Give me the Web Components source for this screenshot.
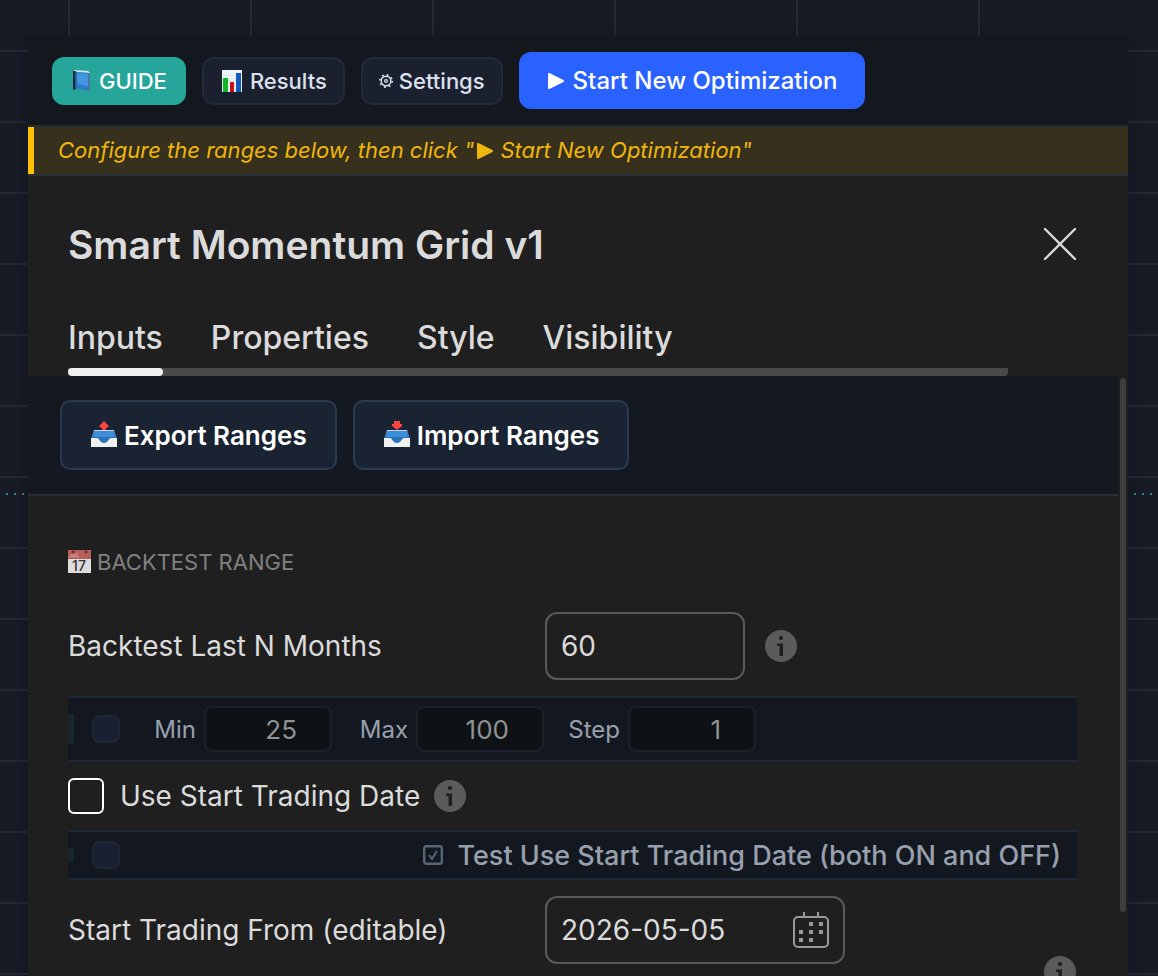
<!DOCTYPE html>
<html lang="en">
<head>
<meta charset="utf-8">
<title>Smart Momentum Grid v1</title>
<style>
  body {
    margin: 0;
    font-family: Inter, "Liberation Sans", sans-serif;
    color: #dbdbdb;
    background: #181b26;
  }
</style>
</head>
<body>
<chart-backdrop>
  <settings-dialog></settings-dialog>
</chart-backdrop>

<script>
function attach(el, html) {
  const template = document.createElement('template');
  template.innerHTML = html;
  el.attachShadow({ mode: 'open' });
  el.shadowRoot.appendChild(template.content.cloneNode(true));
}

// the tray shared by the export and import icons
const TRAY = `
    <path d="M4 9h20l3 10v7H1v-7z" fill="#c3d4e2"/><path d="M4 10h20l3 8-4 4H5l-4-4z" fill="#2c72b8"/>
    <path d="M5 10h18l2 6H3z" fill="#3c8edc"/>
    <path d="M1 17h6c2 0 3 5 7 5s5-5 7-5h6v9H1z" fill="#f0f0ee"/>`;

const ICONS = {
  book: `<svg width="22" height="24" viewBox="0 0 22 24">
    <path d="M2 1l3 1v18l-3 1z" fill="#10283c"/><path d="M2 1l15 1 2 2-14-1z" fill="#dce6ee"/>
    <path d="M4 3l14 1v18L4 19z" fill="#2f7cc6"/><path d="M6 4l11 1v12L6 15z" fill="#4295df"/>
    <path d="M18 4h1v18l-1 0z" fill="#5d7486"/><path d="M5 2v18" stroke="#1f4f7c"/></svg>`,
  chart: `<svg width="24" height="24" viewBox="-2 0 24 24">
    <path d="M0 1h20v22H0z" fill="#edf3f6"/><path d="M0 6h20M0 11h20M0 16h20" stroke="#dae4ea"/>
    <path d="M1 9h5v14H1z" fill="#10b529"/><path d="M8 13h4v10H8z" fill="#c41111"/><path d="M14 4h5v19h-5z" fill="#1559bd"/></svg>`,
  gear: `<svg width="14" height="16" viewBox="1 0 14 16" fill="none" stroke="#dbe2ee">
    <circle cx="8" cy="8" r="4.8" stroke-width="1.4"/><circle cx="8" cy="8" r="1.4" stroke-width="1.2"/>
    <circle cx="8" cy="8" r="6.2" stroke-width="1.6" stroke-dasharray="1.8 3.07"/></svg>`,
  play: `<svg width="18" height="18" viewBox="0 0 18 18"><path d="M2 2v14l14-7z" fill="currentColor" stroke="currentColor" stroke-width="2" stroke-linejoin="round"/></svg>`,
  export: `<svg width="28" height="28" viewBox="0 0 28 28">${TRAY}
    <path d="M14 0l5 5-2 2h-1v2h-4V7h-1L9 5z" fill="#f54740"/></svg>`,
  import: `<svg width="28" height="28" viewBox="0 0 28 28">${TRAY}
    <path d="M11 0h6v3h2v2l-5 4-5-4V3h2z" fill="#f54740"/></svg>`,
  date: `<svg width="23" height="24" viewBox="0 0 23 24">
    <path d="M0 0h23v23H0z" fill="#ddd"/><path d="M0 0h23v9H0z" fill="#b85e5c"/>
    <path d="M3 4v3H1M5 4v3h2V4M9 3v4h2" stroke="#dc9c98" fill="none"/>
    <circle cx="5" cy="2" r="1.4" fill="#642f2e"/><circle cx="18" cy="2" r="1.4" fill="#642f2e"/>
    <text x="11" y="21" font-size="14" font-weight="500" text-anchor="middle" fill="#333">17</text></svg>`,
  info: `<svg width="32" height="32" viewBox="0 0 32 32"><circle cx="16" cy="16" r="16" fill="#5b5b5b"/>
    <circle cx="16" cy="8" r="2.1" fill="#1f1f1f"/><path d="M12 13.5h6V26h-3.5V16H12z" fill="#1f1f1f"/></svg>`,
  calendar: `<svg width="36" height="36" viewBox="0 0 36 36"><rect x="1" y="5" width="34" height="30" rx="4" fill="none" stroke="#9a9a9a" stroke-width="2"/>
    <path d="M11 0v5M25 0v5" stroke="#9a9a9a" stroke-width="2"/>
    <path d="M16 10h4v4h-4zM26 10h4v4h-4zM6 18h4v4H6zM16 18h4v4h-4zM26 18h4v4h-4zM6 26h4v4H6zM16 26h4v4h-4z" fill="#9a9a9a"/></svg>`,
  close: `<svg width="36" height="36" viewBox="0 0 36 36"><path d="M3 3l30 30M33 3L3 33" stroke="#dbdbdb" stroke-width="2.4" stroke-linecap="round"/></svg>`,
  ticked: `<svg width="20" height="20" viewBox="0 0 20 20" fill="none" stroke="#566575" stroke-width="2.4"><rect x="1.2" y="1.2" width="17.6" height="17.6" rx="2"/><path d="M6 10l3 4 5-8" stroke-width="2"/></svg>`
};

class UiIcon extends HTMLElement {
  constructor() {
    super();
    attach(this, `
    <style>
      :host { display: inline-flex; flex: none; }
      svg { display: block; }
    </style>
    ${ICONS[this.getAttribute('name')]}`);
  }
}

// chart grid with the dotted last-price line
class ChartBackdrop extends HTMLElement {
  constructor() {
    super();
    attach(this, `
    <style>
      :host {
        display: flex;
        box-sizing: border-box;
        height: 100vh;
        padding: 36px 30px 0 28px;
        overflow: hidden;
        background:
          linear-gradient(to right, #2b8f87 2px, transparent 2px) 6px 493px / 8px 2px repeat-x,
          linear-gradient(to right, #252935 2px, transparent 2px) 68px 0 / 182px 71px,
          linear-gradient(#252935 2px, transparent 2px) 0 50px / 182px 71px,
          #181b26;
      }
    </style>
    <slot></slot>`);
  }
}

class ToolButton extends HTMLElement {
  constructor() {
    super();
    attach(this, `
    <style>
      :host { display: block; }
      button {
        display: flex;
        align-items: center;
        justify-content: center;
        gap: 6px;
        height: 48px;
        padding: 0 16px;
        border: 2px solid #242a38;
        border-radius: 12px;
        background: #1b202e;
        color: #dbe2ee;
        font: 500 22px Inter, sans-serif;
        white-space: nowrap;
      }
      :host([kind=guide]) button { padding: 0 17px; background: #26a69a; border-color: #26a69a; color: #fff; }
      :host([kind=start]) button {
        gap: 8px;
        height: 57px;
        padding: 0 26px;
        background: #2962ff;
        border-color: #2962ff;
        color: #fff;
        font-size: 24px;
      }
      :host([kind=range]) button {
        height: 70px;
        padding: 0 28px;
        border-color: #2a3a50;
        border-radius: 10px;
        background: #1a2332;
        color: #fff;
        font-size: 26px;
        font-weight: 600;
      }
    </style>
    <button type="button"><ui-icon name="${this.getAttribute('icon')}"></ui-icon><slot></slot></button>`);
  }
}

class HintBanner extends HTMLElement {
  constructor() {
    super();
    attach(this, `
    <style>
      :host {
        display: block;
        padding-left: 24px;
        border-left: 6px solid #ffc107;
        background: #36301c;
        color: #efb60d;
        font-size: 22px;
        font-style: italic;
        line-height: 47px;
      }
      ::slotted(ui-icon) { margin-left: 2px; vertical-align: -2px; }
    </style>
    <slot></slot>`);
  }
}

class TabBar extends HTMLElement {
  constructor() {
    super();
    attach(this, `
    <style>
      :host { display: block; margin-right: 80px; }
      nav {
        display: flex;
        gap: 48px;
        border-radius: 4px;
        background: linear-gradient(#4a4a4a, #4a4a4a) bottom / 100% 8px no-repeat;
      }
      button {
        position: relative;
        padding: 0 0 18px;
        border: 0;
        background: none;
        color: inherit;
        font: 500 32px/40px Inter, sans-serif;
      }
      .active::after {
        content: "";
        position: absolute;
        inset: auto 0 0 0;
        height: 8px;
        border-radius: 4px;
        background: #f0f0f0;
      }
    </style>
    <nav>
      <button type="button" class="active">Inputs</button>
      <button type="button">Properties</button>
      <button type="button">Style</button>
      <button type="button">Visibility</button>
    </nav>`);
  }
}

class InputRow extends HTMLElement {
  constructor() {
    super();
    const date = this.getAttribute('type') === 'date';
    attach(this, `
    <style>
      :host {
        display: grid;
        grid-template-columns: 477px auto 1fr;
        align-items: start;
      }
      label { font-size: 28px; line-height: 68px; }
      .box {
        display: flex;
        align-items: center;
        box-sizing: border-box;
        width: ${date ? 300 : 200}px;
        height: 68px;
        padding: 0 14px;
        border: 2px solid #5a5a5a;
        border-radius: 12px;
      }
      input {
        flex: 1;
        min-width: 0;
        padding: 0;
        border: 0;
        outline: 0;
        background: none;
        color: inherit;
        font: 28px Inter, sans-serif;
      }
      .info { margin: 18px 0 0 20px; }
      .info.end { margin: 60px 2px 0 0; justify-self: end; }
    </style>
    <label for="value">${this.getAttribute('label')}</label>
    <div class="box">
      <input id="value" type="text" value="${this.getAttribute('value')}">
      ${date ? '<ui-icon name="calendar"></ui-icon>' : ''}
    </div>
    <ui-icon class="info ${date ? 'end' : ''}" name="info"></ui-icon>`);
  }
}

class CheckRow extends HTMLElement {
  constructor() {
    super();
    attach(this, `
    <style>
      :host { display: flex; align-items: center; height: 68px; }
      input {
        appearance: none;
        width: 36px;
        height: 36px;
        margin: 0 16px 0 0;
        border: 2px solid #fff;
        border-radius: 6px;
      }
      label { margin-right: 14px; font-size: 28px; }
    </style>
    <input type="checkbox" id="check">
    <label for="check"><slot></slot></label>
    <ui-icon name="info"></ui-icon>`);
  }
}

// dimmed optimisation strip that sits under each input
class OptimizeStrip extends HTMLElement {
  constructor() {
    super();
    attach(this, `
    <style>
      :host {
        display: flex;
        align-items: center;
        box-sizing: border-box;
        height: 66px;
        border: solid #1d2938;
        border-width: 2px 0;
        background: #131820;
        color: #98a0ae;
      }
      :host([short]) { height: 50px; }
      .mark { width: 6px; height: 30px; margin-right: 18px; background: #1c262e; border-radius: 0 2px 2px 0; }
      :host([short]) .mark { height: 14px; border-radius: 4px; }
      input {
        appearance: none;
        box-sizing: border-box;
        width: 28px;
        height: 28px;
        margin: 0;
        border: 2px solid #1f2735;
        border-radius: 8px;
        background: #1a1f31;
      }
    </style>
    <span class="mark"></span>
    <input type="checkbox" aria-label="Optimize">
    <slot></slot>`);
  }
}

class RangeField extends HTMLElement {
  constructor() {
    super();
    attach(this, `
    <style>
      :host { display: flex; align-items: center; gap: 8px; margin-left: 20px; }
      label { width: 56px; text-align: right; font-size: 24px; }
      input {
        box-sizing: border-box;
        width: 128px;
        height: 46px;
        padding: 0 33px 0 8px;
        border: 2px solid #1c202d;
        border-radius: 8px;
        background: #0e1214;
        color: #8f9294;
        font: 26px Inter, sans-serif;
        text-align: right;
      }
    </style>
    <label for="num">${this.getAttribute('label')}</label>
    <input id="num" type="text" inputmode="numeric" value="${this.getAttribute('value')}">`);
  }
}

class SettingsDialog extends HTMLElement {
  constructor() {
    super();
    attach(this, `
    <style>
      :host {
        display: flex;
        flex: 1;
        flex-direction: column;
        min-width: 0;
        background: #1f1f1f;
        box-shadow: 0 4px 16px rgba(0, 10, 20, .3);
      }
      .toolbar {
        display: flex;
        align-items: center;
        gap: 16px;
        padding: 16px 24px;
        border-bottom: 2px solid #222b2f;
        background: #13181e;
      }
      hint-banner { flex: none; }
      header {
        padding: 41px 40px 0;
        border-top: 2px solid #263038;
      }
      .title {
        display: flex;
        align-items: center;
        justify-content: space-between;
        margin-bottom: 45px;
      }
      h1 { margin: 0; font-size: 39px; font-weight: 600; line-height: 56px; }
      .close { padding: 0; margin-right: 10px; border: 0; background: none; }
      .scroll { display: flex; flex: 1; min-height: 0; overflow: hidden; }
      .body { flex: 1; min-width: 0; }
      .thumb { width: 6px; height: 89%; margin: 2px; border-radius: 3px; background: #3d3d3d; }
      .actions {
        display: flex;
        gap: 16px;
        padding: 24px 32px;
        border-bottom: 2px solid #2a2e39;
        background: #131821;
      }
      .fields { padding: 48px 40px 0; }
      h2 {
        display: flex;
        align-items: center;
        gap: 6px;
        margin: 0 0 32px;
        color: #808080;
        font-size: 22px;
        font-weight: 400;
        line-height: 36px;
      }
      input-row { margin-bottom: 16px; }
      .date { margin-top: 16px; }
      .both {
        display: flex;
        align-items: center;
        gap: 14px;
        margin-left: auto;
        padding-right: 17px;
        font-size: 27px;
        font-weight: 500;
      }
    </style>
    <div class="toolbar">
      <tool-button kind="guide" icon="book">GUIDE</tool-button>
      <tool-button icon="chart">Results</tool-button>
      <tool-button icon="gear">Settings</tool-button>
      <tool-button kind="start" icon="play">Start New Optimization</tool-button>
    </div>
    <hint-banner>Configure the ranges below, then click "<ui-icon name="play"></ui-icon> Start New Optimization"</hint-banner>
    <header>
      <div class="title">
        <h1>Smart Momentum Grid v1</h1>
        <button type="button" class="close" aria-label="Close"><ui-icon name="close"></ui-icon></button>
      </div>
      <tab-bar></tab-bar>
    </header>
    <div class="scroll">
      <div class="body">
        <div class="actions">
          <tool-button kind="range" icon="export">Export Ranges</tool-button>
          <tool-button kind="range" icon="import">Import Ranges</tool-button>
        </div>
        <div class="fields">
          <h2><ui-icon name="date"></ui-icon>BACKTEST RANGE</h2>
          <input-row label="Backtest Last N Months" value="60"></input-row>
          <optimize-strip>
            <range-field label="Min" value="25"></range-field>
            <range-field label="Max" value="100"></range-field>
            <range-field label="Step" value="1"></range-field>
          </optimize-strip>
          <check-row>Use Start Trading Date</check-row>
          <optimize-strip short>
            <span class="both"><ui-icon name="ticked"></ui-icon>Test Use Start Trading Date (both ON and OFF)</span>
          </optimize-strip>
          <input-row class="date" type="date" label="Start Trading From (editable)" value="2026-05-05"></input-row>
        </div>
      </div>
      <div class="thumb"></div>
    </div>`);
  }
}

customElements.define('ui-icon', UiIcon);
customElements.define('tool-button', ToolButton);
customElements.define('hint-banner', HintBanner);
customElements.define('tab-bar', TabBar);
customElements.define('input-row', InputRow);
customElements.define('check-row', CheckRow);
customElements.define('optimize-strip', OptimizeStrip);
customElements.define('range-field', RangeField);
customElements.define('settings-dialog', SettingsDialog);
customElements.define('chart-backdrop', ChartBackdrop);
</script>
</body>
</html>
